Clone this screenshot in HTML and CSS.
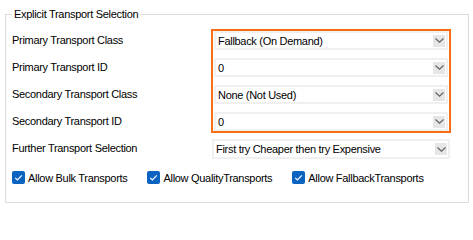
FILE: index.html
```html
<!DOCTYPE html>
<html>
<head>
<meta charset="utf-8">
<link rel="stylesheet" href="styles.css">
</head>
<body>
<fieldset class="group">
  <legend class="group-title">Explicit Transport Selection</legend>
  <div class="form">
    <div class="labels">
      <div class="label">Primary Transport Class</div>
      <div class="label">Primary Transport ID</div>
      <div class="label">Secondary Transport Class</div>
      <div class="label">Secondary Transport ID</div>
      <div class="label">Further Transport Selection</div>
    </div>
    <div class="fields">
      <div class="highlight">
        <div class="combo"><span class="combo-text">Fallback (On Demand)</span><span class="combo-btn"><svg width="9" height="5" viewBox="0 0 9 5"><path d="M0.5 0.5 L4.5 4.2 L8.5 0.5" fill="none" stroke="#5f5f5f" stroke-width="1.1"/></svg></span></div>
        <div class="combo"><span class="combo-text">0</span><span class="combo-btn"><svg width="9" height="5" viewBox="0 0 9 5"><path d="M0.5 0.5 L4.5 4.2 L8.5 0.5" fill="none" stroke="#5f5f5f" stroke-width="1.1"/></svg></span></div>
        <div class="combo"><span class="combo-text">None (Not Used)</span><span class="combo-btn"><svg width="9" height="5" viewBox="0 0 9 5"><path d="M0.5 0.5 L4.5 4.2 L8.5 0.5" fill="none" stroke="#5f5f5f" stroke-width="1.1"/></svg></span></div>
        <div class="combo"><span class="combo-text">0</span><span class="combo-btn"><svg width="9" height="5" viewBox="0 0 9 5"><path d="M0.5 0.5 L4.5 4.2 L8.5 0.5" fill="none" stroke="#5f5f5f" stroke-width="1.1"/></svg></span></div>
      </div>
      <div class="combo combo-wide"><span class="combo-text">First try Cheaper then try Expensive</span><span class="combo-btn"><svg width="9" height="5" viewBox="0 0 9 5"><path d="M0.5 0.5 L4.5 4.2 L8.5 0.5" fill="none" stroke="#5f5f5f" stroke-width="1.1"/></svg></span></div>
    </div>
  </div>
  <div class="checks">
    <label class="check"><span class="box"><svg width="13" height="13" viewBox="0 0 13 13"><path d="M3.2 6.8 L5.4 9 L9.8 4.4" fill="none" stroke="#ffffff" stroke-width="1.2"/></svg></span>Allow Bulk Transports</label>
    <label class="check"><span class="box"><svg width="13" height="13" viewBox="0 0 13 13"><path d="M3.2 6.8 L5.4 9 L9.8 4.4" fill="none" stroke="#ffffff" stroke-width="1.2"/></svg></span>Allow QualityTransports</label>
    <label class="check"><span class="box"><svg width="13" height="13" viewBox="0 0 13 13"><path d="M3.2 6.8 L5.4 9 L9.8 4.4" fill="none" stroke="#ffffff" stroke-width="1.2"/></svg></span>Allow FallbackTransports</label>
  </div>
</fieldset>
</body>
</html>
```
FILE: styles.css
```css
html, body {
  margin: 0;
  padding: 0;
  background: #ffffff;
}
body {
  font-family: "Liberation Sans", Arial, sans-serif;
  font-size: 11px;
  letter-spacing: -0.3px;
  color: #000000;
  width: 473px;
  height: 206px;
  overflow: hidden;
}
.group {
  margin: 7px 4px 0 5px;
  padding: 7px 0 0 6px;
  border: 1px solid #dcdcdc;
  box-sizing: border-box;
  height: 196px;
}
.group-title {
  padding: 0 2px;
  margin-left: 0;
  line-height: 15px;
}
.form {
  display: flex;
}
.labels {
  width: 199px;
  display: flex;
  flex-direction: column;
  gap: 8px;
  padding-top: 2px;
}
.label {
  height: 19px;
  line-height: 19px;
}
.fields {
  width: 240px;
  display: flex;
  flex-direction: column;
}
.highlight {
  border: 2px solid #f96d12;
  padding: 0 1px;
  display: flex;
  flex-direction: column;
  gap: 8px;
}
.combo {
  height: 19px;
  box-sizing: border-box;
  border: 2px solid #f0f0f0;
  background: #ffffff;
  display: flex;
  align-items: center;
  justify-content: space-between;
  padding: 0 1px 0 2px;
}
.combo-wide {
  margin: 6px 0 0 1px;
  width: 238px;
  height: 20px;
}
.combo-text {
  white-space: nowrap;
}
.combo-btn {
  width: 12px;
  height: 12px;
  background: #e6e6e6;
  display: flex;
  align-items: center;
  justify-content: center;
}
.checks {
  display: flex;
  gap: 20px;
  margin-top: 12px;
}
.check {
  display: flex;
  align-items: center;
  gap: 3px;
  height: 13px;
  white-space: nowrap;
}
.box {
  width: 13px;
  height: 13px;
  background: #0c64c0;
  border-radius: 2px;
  display: block;
}
.box svg {
  display: block;
}
```
